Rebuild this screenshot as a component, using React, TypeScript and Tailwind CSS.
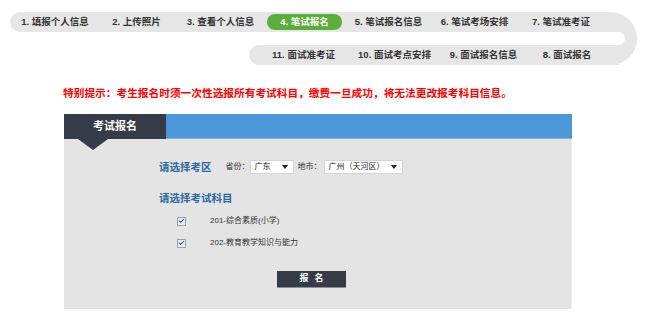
import { Check } from "lucide-react"

const font = "font-['Liberation_Sans','Noto_Sans_CJK_SC',sans-serif]"

const row1 = [
  { label: "1. 填报个人信息", w: "w-[80px]" },
  { label: "2. 上传照片", w: "w-[83px]" },
  { label: "3. 查看个人信息", w: "w-[85px]" },
  { label: "4. 笔试报名", w: "w-[83px]", active: true },
  { label: "5. 笔试报名信息", w: "w-[85px]" },
  { label: "6. 笔试考场安排", w: "w-[87px]" },
  { label: "7. 笔试准考证", w: "w-[86px]" },
]

const row2 = [
  { label: "11. 面试准考证", w: "w-[91px]" },
  { label: "10. 面试考点安排", w: "w-[91px]" },
  { label: "9. 面试报名信息", w: "w-[87px]" },
  { label: "8. 面试报名", w: "w-[80px]" },
]

function Arrow() {
  return (
    <svg width="6" height="4" viewBox="0 0 6 4" className="shrink-0">
      <path d="M0 0h6L3 4z" fill="#222" />
    </svg>
  )
}

function FakeSelect({ value, width }: { value: string; width: string }) {
  return (
    <div
      className={`flex h-[14px] ${width} items-center justify-between border border-[#d4d4d4] bg-white pr-[5px] pl-[4px] text-[8px] leading-none whitespace-nowrap text-[#222]`}
    >
      <span>{value}</span>
      <Arrow />
    </div>
  )
}

function Subject({ label }: { label: string }) {
  return (
    <div className="flex h-[12px] items-center">
      <div className="ml-[18px] flex h-[9px] w-[9px] items-center justify-center border border-[#a0a0a0] bg-[#ececec]">
        <Check className="h-[8px] w-[8px] text-[#1f4fc0]" strokeWidth={3.5} />
      </div>
      <span className="ml-[24px] text-[8px] leading-none text-[#333]">{label}</span>
    </div>
  )
}

export default function App() {
  return (
    <div className={`h-[322px] w-[645px] overflow-hidden bg-white ${font}`}>
      {/* step bar */}
      <div className="relative mt-[12px] ml-[10px] h-[53px] w-[627px]">
        <div className="absolute top-0 right-0 h-[53px] w-[60px] rounded-r-[26.5px] bg-[#e6e6e6]" />
        <div className="absolute top-[20px] right-[12px] h-[13px] w-[80px] rounded-r-full bg-white" />
        <div className="relative flex flex-col gap-[13px]">
          <div className="flex h-[20px] w-[600px] items-center rounded-l-full bg-[#e6e6e6] pl-[5px]">
            {row1.map((s) => (
              <div className={`flex ${s.w} justify-center`} key={s.label}>
                {s.active ? (
                  <span className="flex h-[16px] w-[75px] items-center justify-center rounded-full bg-[#5aae3b] text-[9.5px] font-bold text-white">
                    {s.label}
                  </span>
                ) : (
                  <span className="text-[9.5px] font-bold text-[#333]">{s.label}</span>
                )}
              </div>
            ))}
          </div>
          <div className="ml-[239px] flex h-[20px] w-[370px] items-center rounded-l-full bg-[#e6e6e6] pl-[9px]">
            {row2.map((s) => (
              <div className={`flex ${s.w} justify-center`} key={s.label}>
                <span className="text-[9.5px] font-bold text-[#333]">{s.label}</span>
              </div>
            ))}
          </div>
        </div>
      </div>

      <p className="mt-[22px] ml-[63px] text-[10.7px] leading-[12px] font-bold whitespace-nowrap text-[#ff0000]">
        特别提示：考生报名时须一次性选报所有考试科目，缴费一旦成功，将无法更改报考科目信息。
      </p>

      {/* panel */}
      <div className="mt-[15px] ml-[64px] w-[508px]">
        <div className="flex h-[25px]">
          <div className="relative flex w-[102px] items-center justify-center bg-[#363b48] text-[11px] font-bold text-white">
            考试报名
            <div className="absolute top-[25px] left-[14px] h-0 w-0 border-x-[15px] border-t-[11px] border-x-transparent border-t-[#363b48]" />
          </div>
          <div className="flex-1 border-b border-[#7fb4e2] bg-[#4a98d8]" />
        </div>
        <div className="h-[170px] border-r border-[#efefef] bg-[#e4e4e4] pt-[21px] pl-[95px]">
          <div className="flex h-[14px] items-center whitespace-nowrap">
            <span className="text-[10.5px] leading-none font-bold text-[#2a6aa0]">请选择考区</span>
            <span className="ml-[14px] text-[8px] leading-none text-[#333]">省份：</span>
            <FakeSelect value="广东" width="w-[44px]" />
            <span className="ml-[4px] text-[8px] leading-none text-[#333]">地市：</span>
            <div className="ml-[2px]">
              <FakeSelect value="广州（天河区）" width="w-[79px]" />
            </div>
          </div>
          <div className="mt-[17px] h-[14px] text-[10.5px] leading-[14px] font-bold whitespace-nowrap text-[#2a6aa0]">
            请选择考试科目
          </div>
          <div className="mt-[10px] flex flex-col gap-[10px]">
            <Subject label="201-综合素质(小学)" />
            <Subject label="202-教育教学知识与能力" />
          </div>
          <button
            className="mt-[22px] ml-[118px] flex h-[17px] w-[69px] items-center justify-center border-b border-[#8a8f9a] bg-[#363b48] text-[9px] font-bold tracking-[6px] text-white"
            type="button"
          >
            <span className="pl-[6px]">报名</span>
          </button>
        </div>
      </div>
    </div>
  )
}
